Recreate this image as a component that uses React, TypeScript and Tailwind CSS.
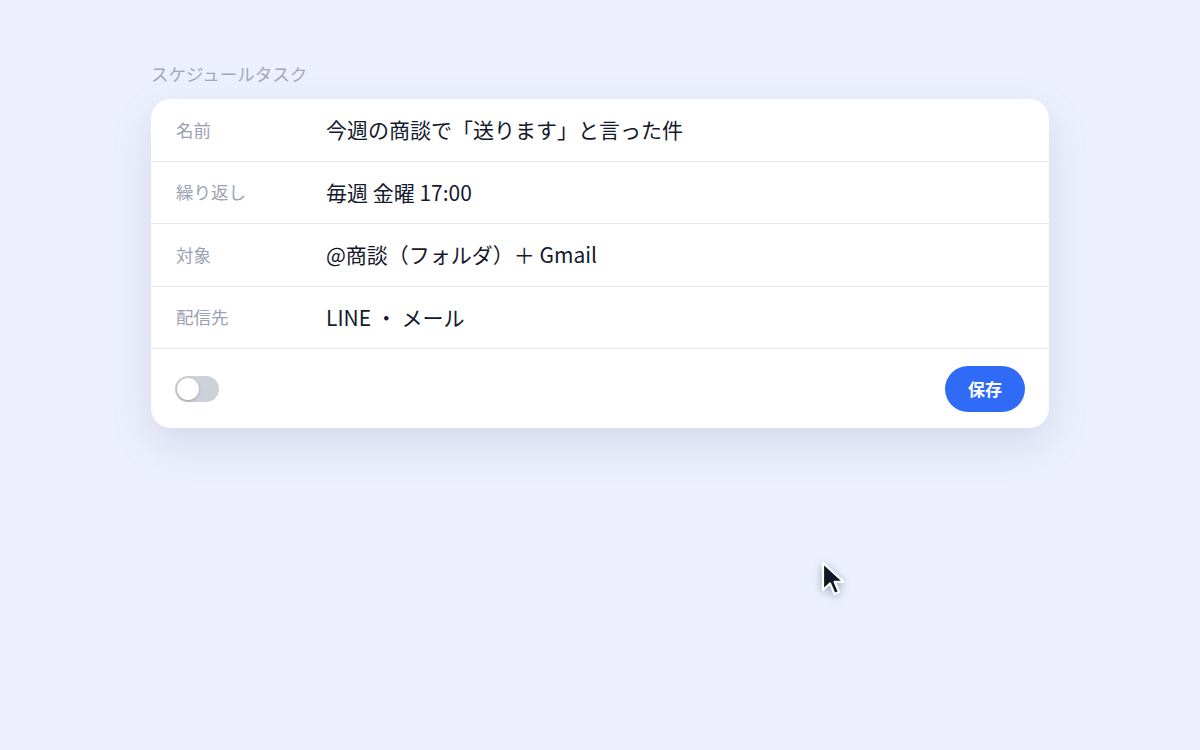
import React, { useState } from "react";

const rows: { label: string; value: string }[] = [
  { label: "名前", value: "今週の商談で「送ります」と言った件" },
  { label: "繰り返し", value: "毎週 金曜 17:00" },
  { label: "対象", value: "@商談（フォルダ）＋ Gmail" },
  { label: "配信先", value: "LINE ・ メール" },
];

const Cursor = () => (
  <svg width="30" height="40" viewBox="0 0 30 40" className="drop-shadow-[0_2px_4px_rgba(30,40,80,0.35)]">
    <path
      d="M3 2 L3 29 L10 22.5 L14.5 33 L19 31 L14.6 20.8 L23.5 20.8 Z"
      fill="#111827"
      stroke="#ffffff"
      strokeWidth="2.2"
      strokeLinejoin="round"
    />
  </svg>
);

export default function App() {
  const [enabled, setEnabled] = useState(false);

  return (
    <div
      className="relative w-full h-[750px] bg-[#edf0fc] overflow-hidden"
      style={{ fontFamily: '"Noto Sans CJK JP", "Noto Sans", sans-serif' }}
    >
      <div className="pt-[62px] pl-[151px] w-[1049px]">
        <div className="text-[17.5px] text-[#a3a8b8] mb-[13px] leading-[24px]">スケジュールタスク</div>

        <div className="bg-white rounded-[20px] shadow-[0_16px_40px_rgba(80,95,160,0.16)] overflow-hidden">
          {rows.map((r) => (
            <div key={r.label} className="flex items-center h-[62.5px] px-[25px] border-b border-[#e3e6ee]">
              <div className="w-[150px] text-[17.5px] text-[#9ba1b3]">{r.label}</div>
              <div className="text-[21px] text-[#141a2b]">{r.value}</div>
            </div>
          ))}

          {/* footer: toggle + save */}
          <div className="flex items-center justify-between h-[79px] px-[24px]">
            <button
              onClick={() => setEnabled(!enabled)}
              className={`relative w-[44px] h-[26px] rounded-full ${enabled ? "bg-[#2f6bf6]" : "bg-[#cdd1da]"}`}
            >
              <span
                className={`absolute top-[2px] w-[22px] h-[22px] rounded-full bg-white shadow-[0_1px_3px_rgba(0,0,0,0.25)] ${enabled ? "left-[20px]" : "left-[2px]"}`}
              />
            </button>
            <button className="w-[80px] h-[46px] rounded-full bg-[#2f6bf6] text-white text-[17px] font-bold">
              保存
            </button>
          </div>
        </div>
      </div>

      <div className="absolute left-[820px] top-[561px]">
        <Cursor />
      </div>
    </div>
  );
}
